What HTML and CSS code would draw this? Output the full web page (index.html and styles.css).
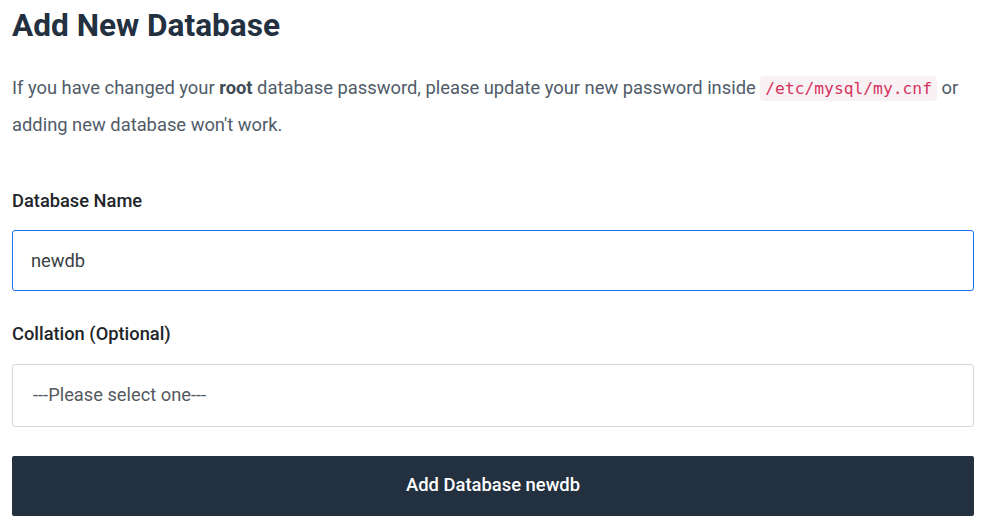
FILE: index.html
```html
<!DOCTYPE html>
<html>
<head>
<meta charset="utf-8">
<link rel="stylesheet" href="styles.css">
</head>
<body>
<div class="page">
  <h1 class="title">Add New Database</h1>
  <p class="intro">If you have changed your <strong>root</strong> database password, please update your new password inside <code>/etc/mysql/my.cnf</code> or adding new database won't work.</p>
  <form class="form">
    <label class="label label-first">Database Name</label>
    <div class="field field-focus">newdb</div>
    <label class="label label-second">Collation (Optional)</label>
    <div class="field field-select">---Please select one---</div>
    <button type="button" class="btn">Add Database newdb</button>
  </form>
</div>
</body>
</html>
```

FILE: styles.css
```css
html, body {
  margin: 0;
  padding: 0;
  background: #ffffff;
}
body {
  font-family: Roboto, "Liberation Sans", sans-serif;
}
.page {
  padding: 0 11px 0 12px;
}
.title {
  margin: 7px 0 0 0;
  font-size: 31.6px;
  line-height: 38px;
  font-weight: 700;
  color: #22303f;
}
.intro {
  margin: 25px 0 0 0;
  font-size: 18.35px;
  line-height: 36px;
  color: #505c69;
}
.intro strong {
  font-weight: 700;
  color: #3f4a56;
}
.intro code {
  font-family: "DejaVu Sans Mono", "Liberation Mono", monospace;
  font-size: 16.3px;
  color: #d6335f;
  background: #f8f2f4;
  border-radius: 4px;
  padding: 3px 5px;
}
.form {
  display: flex;
  flex-direction: column;
}
.label {
  font-size: 18.3px;
  line-height: 24px;
  font-weight: 500;
  color: #212529;
}
.label-first {
  margin-top: 46px;
}
.label-second {
  margin-top: 31px;
}
.field {
  box-sizing: border-box;
  margin-top: 17px;
  height: 61px;
  border: 1px solid #d3d8de;
  border-radius: 3px;
  padding: 0 18px;
  display: flex;
  align-items: center;
  font-size: 18.3px;
  color: #3a3f45;
}
.field-focus {
  border-color: #1a73f0;
}
.field-select {
  margin-top: 18px;
  height: 63px;
  padding: 0 18px 2px 20px;
  color: #555a60;
}
.btn {
  margin-top: 29px;
  height: 60px;
  padding: 0 0 3px 0;
  border: none;
  border-radius: 2px;
  background: #22303f;
  color: #ffffff;
  font-family: Roboto, "Liberation Sans", sans-serif;
  font-size: 18.4px;
  font-weight: 500;
  cursor: pointer;
}
```
